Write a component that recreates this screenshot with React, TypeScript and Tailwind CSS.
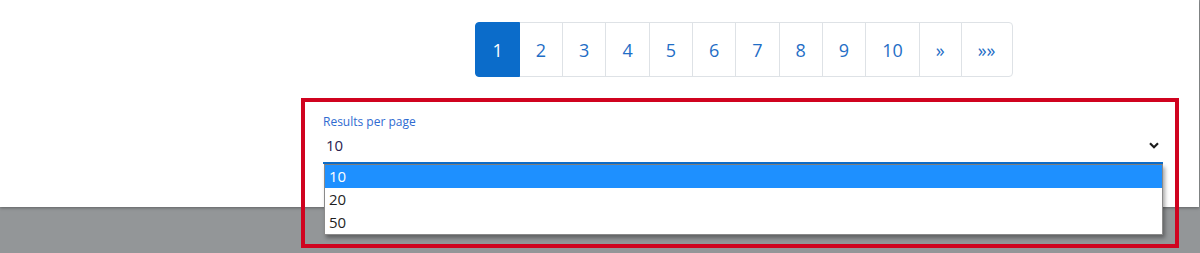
import { useState } from 'react';

const pages = ['1', '2', '3', '4', '5', '6', '7', '8', '9', '10', '»', '»»'];
const options = ['10', '20', '50'];

function Pagination() {
  return (
    <ul className="flex justify-center pl-[2px]">
      {pages.map((p, idx) => {
        const active = idx === 0;
        const first = idx === 0;
        const last = idx === pages.length - 1;
        return (
          <li key={p} className={first ? '' : '-ml-px'}>
            <a
              href="#"
              className={`flex h-[55px] items-center border px-4 text-[18px] leading-6 ${
                active
                  ? 'relative z-10 border-[#0b6cca] bg-[#0b6cca] text-white'
                  : 'border-[#dee2e6] bg-white text-[#1f6ec6]'
              } ${first ? 'rounded-l-[4px]' : ''} ${last ? 'rounded-r-[4px]' : ''}`}
            >
              {p}
            </a>
          </li>
        );
      })}
    </ul>
  );
}

function ResultsSelect() {
  const [value] = useState('10');

  return (
    <div className="relative">
      {/* highlight outline around the control */}
      <div className="pointer-events-none absolute left-[-22px] right-[-16px] top-[-16px] z-30 h-[150px] border-4 border-[#d0031f]" />

      <label className="block text-[12px] leading-4 text-[#2f6bd1]">Results per page</label>
      <div className="flex h-[34px] items-center justify-between border-b-2 border-[#0b6cca] pb-[2px] pl-[3px] pr-[3px]">
        <span className="text-[15px] text-[#2a2150]">{value}</span>
        <svg width="10" height="7" viewBox="0 0 10 7" className="mr-[1px]">
          <polyline points="1,1.2 5,5.2 9,1.2" fill="none" stroke="#1c1c1c" strokeWidth="2.2" />
        </svg>
      </div>

      {/* open option list */}
      <ul className="absolute left-px right-0 top-full z-20 border border-[#8a8a8a] border-t-[#7d7d7d] bg-white shadow-[2px_3px_4px_rgba(0,0,0,0.35)]">
        {options.map((o) => (
          <li
            key={o}
            className={`h-[23px] pl-[4px] text-[15px] leading-[23px] ${
              o === value ? 'bg-[#1e90ff] text-white' : 'text-[#1f1f1f]'
            }`}
          >
            {o}
          </li>
        ))}
      </ul>
    </div>
  );
}

export default function App() {
  return (
    <div className="h-[253px] w-full bg-[#939698] font-['Open_Sans',sans-serif]">
      <div className="h-[207px] w-[1199px] bg-white pt-[22px] shadow-[0_1px_3px_rgba(0,0,0,0.35)]">
        <div className="ml-[323px] w-[840px]">
          <Pagination />
          <div className="mt-[37px]">
            <ResultsSelect />
          </div>
        </div>
      </div>
    </div>
  );
}
